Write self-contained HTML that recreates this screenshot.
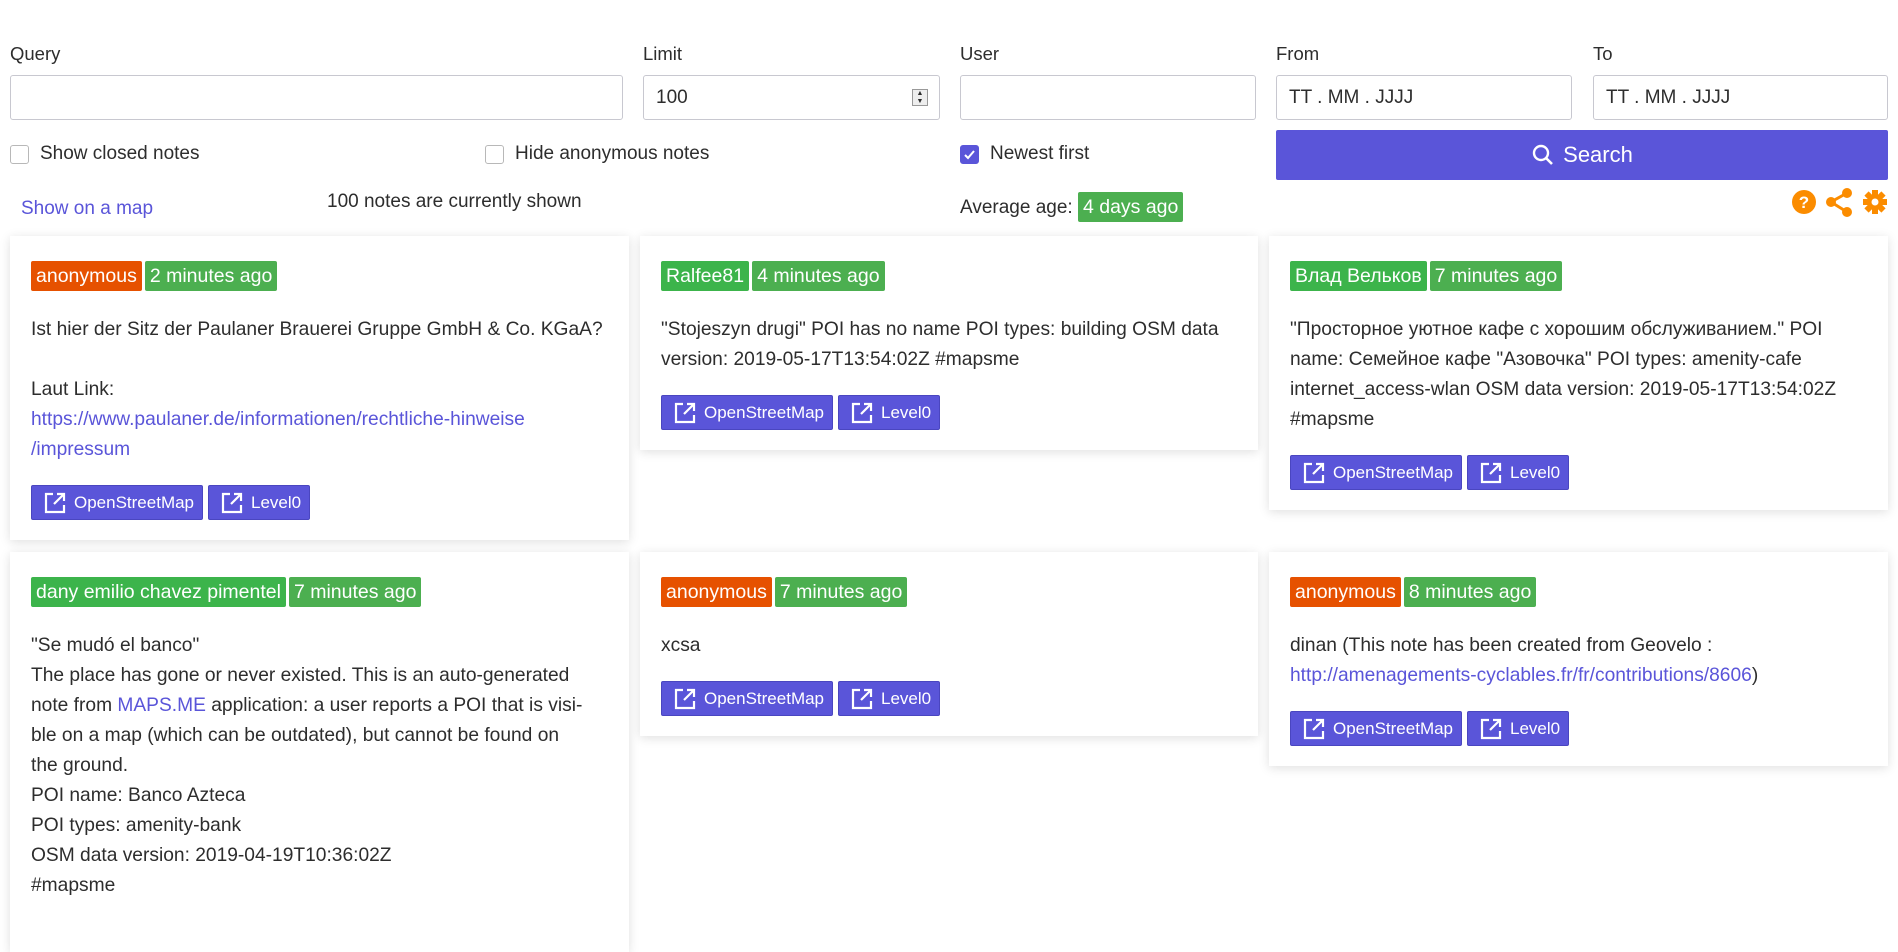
<!DOCTYPE html>
<html><head><meta charset="utf-8">
<style>
*{box-sizing:border-box;margin:0;padding:0}
html,body{width:1898px;height:902px;overflow:hidden;background:#fff;font-family:"Liberation Sans","Noto Sans CJK SC",sans-serif;color:#2d2d2d}
.abs{position:absolute}
.lbl{font-size:18.5px;top:43px}
.inp{top:75px;height:45px;border:1px solid #c8c8d0;border-radius:3px;background:#fff;font-size:19px;padding:0 12px;line-height:43px}
.chk{top:143px;font-size:19px;line-height:22px;display:flex;align-items:center}
.box{width:19px;height:19px;border:1px solid #b8b8b8;border-radius:3px;margin-right:11px;background:#fff}
.box.on{background:#5a55d9;border-color:#5a55d9}
.card{background:#fff;box-shadow:0 2px 10px rgba(0,0,0,.13);padding:25px 21px 20px 21px;font-size:19.2px;line-height:30px}
.badge{display:inline-block;color:#fff;height:30px;line-height:30px;padding:0 5px;border-radius:2px;font-size:19.5px;margin-right:3px}
.or{background:#e65100}.gr{background:#3cb44b}.lg{background:#4caf50}
.txt{margin-top:23px}
.nw{white-space:nowrap}
.btns{margin-top:20px;display:flex;gap:5px}
.btn{background:#5a55d9;color:#fff;height:35px;border-radius:2px;display:flex;align-items:center;padding:0 8px 0 12px;font-size:17px;border:1px solid #4a46c0}
.btn svg{margin-right:8px}
a{color:#5a55d9;text-decoration:none}
</style></head><body>
<div class="abs lbl" style="left:10px">Query</div>
<div class="abs lbl" style="left:643px">Limit</div>
<div class="abs lbl" style="left:960px">User</div>
<div class="abs lbl" style="left:1276px">From</div>
<div class="abs lbl" style="left:1593px">To</div>
<div class="abs inp" style="left:10px;width:613px"></div>
<div class="abs inp" style="left:643px;width:297px">100<span style="position:absolute;right:11px;top:13px;width:16px;height:17px;border:1px solid #999;background:#eee;font-size:7px;line-height:8px;text-align:center">▲<br>▼</span></div>
<div class="abs inp" style="left:960px;width:296px"></div>
<div class="abs inp" style="left:1276px;width:296px">TT . MM . JJJJ</div>
<div class="abs inp" style="left:1593px;width:295px">TT . MM . JJJJ</div>
<div class="abs chk" style="left:10px"><span class="box"></span>Show closed notes</div>
<div class="abs chk" style="left:485px"><span class="box"></span>Hide anonymous notes</div>
<div class="abs chk" style="left:960px"><span class="box on"><svg width="17" height="17" viewBox="0 0 17 17"><path d="M4 9l3 3 6-7" stroke="#fff" stroke-width="2" fill="none"/></svg></span>Newest first</div>
<div class="abs" style="left:1276px;top:130px;width:612px;height:50px;background:#5a55d9;border-radius:2px;color:#fff;font-size:22px;display:flex;align-items:center;justify-content:center"><svg width="24" height="24" viewBox="0 0 24 24" style="margin-right:8px"><circle cx="10" cy="10" r="7" stroke="#fff" stroke-width="2.4" fill="none"/><path d="M15 15l6 6" stroke="#fff" stroke-width="2.6"/></svg>Search</div>
<div class="abs" style="left:21px;top:198px;font-size:19px;color:#5a55d9">Show on a map</div>
<div class="abs" style="left:327px;top:191px;font-size:19px">100 notes are currently shown</div>
<div class="abs" style="left:960px;top:192px;font-size:19px;line-height:30px">Average age: <span class="badge lg">4 days ago</span></div>
<svg class="abs" style="left:1790px;top:188px" width="100" height="30" viewBox="0 0 100 30">
<circle cx="14" cy="14" r="12" fill="#fb8c00"/><text x="14" y="20" font-size="17" font-weight="bold" fill="#fff" text-anchor="middle" font-family="Liberation Sans">?</text>
<g fill="#fb8c00"><circle cx="57" cy="5" r="5"/><circle cx="57" cy="24" r="5"/><circle cx="41" cy="14" r="5"/></g><path d="M57 5L41 14L57 24" stroke="#fb8c00" stroke-width="3" fill="none"/>
<g transform="translate(85,14)" fill="#fb8c00"><circle r="8"/><rect x="-3" y="-12" width="6" height="24"/><rect x="-12" y="-3" width="24" height="6"/><g transform="rotate(45)"><rect x="-3" y="-12" width="6" height="24"/><rect x="-12" y="-3" width="24" height="6"/></g><circle r="3.5" fill="#fff"/></g>
</svg>

<div class="abs card" style="left:10px;top:236px;width:619px;height:304px">
<span class="badge or">anonymous</span><span class="badge lg">2 minutes ago</span>
<div class="txt nw">Ist hier der Sitz der Paulaner Brauerei Gruppe GmbH &amp; Co. KGaA?<br><br>Laut Link:<br><a>https://www.paulaner.de/informationen/rechtliche-hinweise<br>/impressum</a></div>
<div class="btns"><div class="btn"><svg width="22" height="22" viewBox="0 0 22 22"><path d="M9 2H2v18h18v-7M13 2h7v7M20 2l-10 10" stroke="#fff" stroke-width="2.2" fill="none"/></svg>OpenStreetMap</div><div class="btn"><svg width="22" height="22" viewBox="0 0 22 22"><path d="M9 2H2v18h18v-7M13 2h7v7M20 2l-10 10" stroke="#fff" stroke-width="2.2" fill="none"/></svg>Level0</div></div>
</div>
<div class="abs card" style="left:640px;top:236px;width:618px;height:214px">
<span class="badge gr">Ralfee81</span><span class="badge lg">4 minutes ago</span>
<div class="txt nw">"Stojeszyn drugi" POI has no name POI types: building OSM data<br>version: 2019-05-17T13:54:02Z #mapsme</div>
<div class="btns"><div class="btn"><svg width="22" height="22" viewBox="0 0 22 22"><path d="M9 2H2v18h18v-7M13 2h7v7M20 2l-10 10" stroke="#fff" stroke-width="2.2" fill="none"/></svg>OpenStreetMap</div><div class="btn"><svg width="22" height="22" viewBox="0 0 22 22"><path d="M9 2H2v18h18v-7M13 2h7v7M20 2l-10 10" stroke="#fff" stroke-width="2.2" fill="none"/></svg>Level0</div></div>
</div>
<div class="abs card" style="left:1269px;top:236px;width:619px;height:274px">
<span class="badge gr">Влад Вельков</span><span class="badge lg">7 minutes ago</span>
<div class="txt nw">"Просторное уютное кафе с хорошим обслуживанием." POI<br>name: Семейное кафе "Азовочка" POI types: amenity-cafe<br>internet_access-wlan OSM data version: 2019-05-17T13:54:02Z<br>#mapsme</div>
<div class="btns"><div class="btn"><svg width="22" height="22" viewBox="0 0 22 22"><path d="M9 2H2v18h18v-7M13 2h7v7M20 2l-10 10" stroke="#fff" stroke-width="2.2" fill="none"/></svg>OpenStreetMap</div><div class="btn"><svg width="22" height="22" viewBox="0 0 22 22"><path d="M9 2H2v18h18v-7M13 2h7v7M20 2l-10 10" stroke="#fff" stroke-width="2.2" fill="none"/></svg>Level0</div></div>
</div>
<div class="abs card" style="left:10px;top:552px;width:619px;height:400px">
<span class="badge gr">dany emilio chavez pimentel</span><span class="badge lg">7 minutes ago</span>
<div class="txt nw">"Se mudó el banco"<br>The place has gone or never existed. This is an auto-generated<br>note from <a>MAPS.ME</a> application: a user reports a POI that is visi-<br>ble on a map (which can be outdated), but cannot be found on<br>the ground.<br>POI name: Banco Azteca<br>POI types: amenity-bank<br>OSM data version: 2019-04-19T10:36:02Z<br>#mapsme</div>
</div>
<div class="abs card" style="left:640px;top:552px;width:618px;height:184px">
<span class="badge or">anonymous</span><span class="badge lg">7 minutes ago</span>
<div class="txt">xcsa</div>
<div class="btns"><div class="btn"><svg width="22" height="22" viewBox="0 0 22 22"><path d="M9 2H2v18h18v-7M13 2h7v7M20 2l-10 10" stroke="#fff" stroke-width="2.2" fill="none"/></svg>OpenStreetMap</div><div class="btn"><svg width="22" height="22" viewBox="0 0 22 22"><path d="M9 2H2v18h18v-7M13 2h7v7M20 2l-10 10" stroke="#fff" stroke-width="2.2" fill="none"/></svg>Level0</div></div>
</div>
<div class="abs card" style="left:1269px;top:552px;width:619px;height:214px">
<span class="badge or">anonymous</span><span class="badge lg">8 minutes ago</span>
<div class="txt nw">dinan (This note has been created from Geovelo :<br><a>http://amenagements-cyclables.fr/fr/contributions/8606</a>)</div>
<div class="btns"><div class="btn"><svg width="22" height="22" viewBox="0 0 22 22"><path d="M9 2H2v18h18v-7M13 2h7v7M20 2l-10 10" stroke="#fff" stroke-width="2.2" fill="none"/></svg>OpenStreetMap</div><div class="btn"><svg width="22" height="22" viewBox="0 0 22 22"><path d="M9 2H2v18h18v-7M13 2h7v7M20 2l-10 10" stroke="#fff" stroke-width="2.2" fill="none"/></svg>Level0</div></div>
</div>
</body></html>
